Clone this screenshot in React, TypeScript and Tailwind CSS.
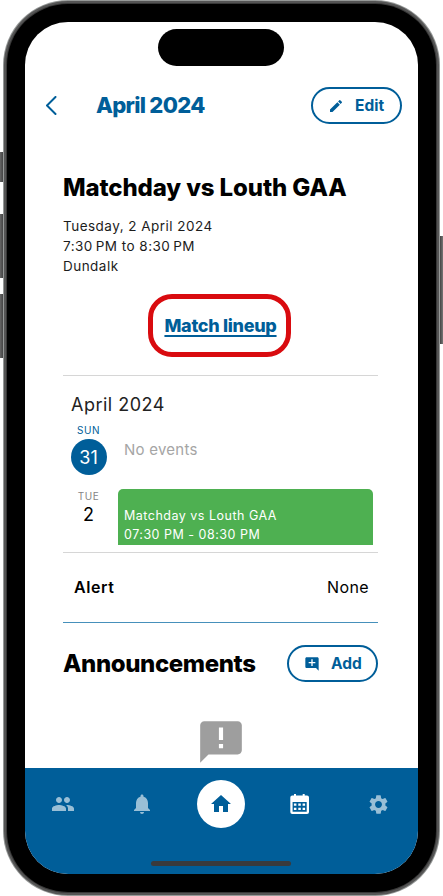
import type { ReactNode } from "react";
import { MdAddComment, MdAnnouncement, MdEdit, MdHome, MdNotifications, MdPeople, MdSettings } from "react-icons/md";

function PillButton({ icon, label }: { icon: ReactNode; label: string }) {
  return (
    <button className="flex h-[37px] w-[91px] items-center rounded-[19px] border-2 border-[#005e99] pl-[15px] text-[#005e99]">
      {icon}
      <span className="ml-[11px] text-[15.5px] leading-5 font-bold">{label}</span>
    </button>
  );
}

function ChevronLeft() {
  return (
    <svg className="h-5 w-3" viewBox="0 0 12 20" fill="none" stroke="#005e99" strokeWidth="2" strokeLinecap="round" strokeLinejoin="round">
      <path d="M10.500 1 2 9.500l8.500 8.500" />
    </svg>
  );
}

function CalendarMonth() {
  return (
    <svg className="size-6" viewBox="0 0 24 24" fill="currentColor">
      <path
        fillRule="evenodd"
        d="M6 2h2v1.500h6.700V2h2v1.500H19a2 2 0 0 1 2 2V20a2 2 0 0 1-2 2H4.300a2 2 0 0 1-2-2V5.500a2 2 0 0 1 2-2H6ZM4.600 10v9.800h14.100V10Z"
      />
      <path d="M5.900 11.500h2.500v2.300H5.900ZM10.300 11.500h2.500v2.300h-2.500ZM14.600 11.500h2.500v2.300h-2.500ZM5.900 15.700h2.500V18H5.900ZM10.300 15.700h2.500V18h-2.500ZM14.600 15.700h2.500V18h-2.500Z" />
    </svg>
  );
}

function TabBar() {
  return (
    <nav className="flex h-[106px] shrink-0 flex-col items-center bg-[#005e99]">
      <div className="mt-[12px] grid h-[48px] w-full grid-cols-5 place-items-center text-[#99bfd6]">
        <MdPeople className="ml-[-3px] size-6" />
        <MdNotifications className="ml-[-2px] size-6" />
        <div className="ml-[-1px] flex size-[48px] items-center justify-center rounded-full bg-white text-[#005e99]">
          <MdHome className="size-6" />
        </div>
        <div className="ml-[-1px] text-white">
          <CalendarMonth />
        </div>
        <MdSettings className="ml-[-1px] size-[23px]" />
      </div>
      <div className="mt-[33px] ml-[-1px] h-[5px] w-[140px] rounded-full bg-[#3a3a3c]" />
    </nav>
  );
}

export default function App() {
  return (
    <div className="relative h-[896px] w-[443px] overflow-hidden bg-white px-[3px] font-['Inter','Liberation_Sans',sans-serif]">
      <div className="absolute top-[152px] left-0 h-[30px] w-[3px] bg-gradient-to-r from-[#666] to-[#444]" />
      <div className="absolute top-[214px] left-0 h-[64px] w-[3px] bg-gradient-to-r from-[#666] to-[#444]" />
      <div className="absolute top-[294px] left-0 h-[64px] w-[3px] bg-gradient-to-r from-[#666] to-[#444]" />
      <div className="absolute top-[236px] right-0 h-[108px] w-[3px] bg-gradient-to-r from-[#444] to-[#777]" />

      <div className="h-[896px] w-[437px] rounded-[65px] bg-[#969998] p-px">
        <div className="h-full rounded-[64px] bg-[#555] p-[2px]">
          <div className="h-full rounded-[62px] bg-[#383838] p-px">
            <div className="h-full rounded-[61px] bg-black px-[18px] py-[18px]">
              <main className="relative flex h-[852px] w-[393px] flex-col overflow-hidden rounded-[43px] bg-white">
                <div className="absolute top-[7px] left-[132.5px] h-[37px] w-[126px] rounded-full bg-black" />

                <header className="mt-[65px] flex h-[37px] shrink-0 items-center pl-5">
                  <ChevronLeft />
                  <h1 className="mt-[-1px] ml-[39px] grow text-[22px] leading-7 font-extrabold tracking-[-0.7px] text-[#005e99]">April 2024</h1>
                  <div className="mr-4">
                    <PillButton icon={<MdEdit className="size-4" />} label="Edit" />
                  </div>
                </header>

                <div className="flex grow flex-col pr-10 pl-[38px]">
                  <h2 className="mt-[49px] h-[30px] text-[24px] leading-[30px] font-extrabold tracking-[-0.12px] whitespace-nowrap">Matchday vs Louth GAA</h2>
                  <div className="mt-[13px] text-[13.5px] leading-5 tracking-[0.47px] whitespace-nowrap text-[#1c1c1c]">
                    <p>Tuesday, 2 April 2024</p>
                    <p>
                      7:30{"\u202f"}PM to 8:30{"\u202f"}PM
                    </p>
                    <p>Dundalk</p>
                  </div>

                  <div className="mt-[18px] ml-[85px] flex h-[63px] w-[143px] items-center justify-center rounded-[24px] border-5 border-[#d90b0f]">
                    <a className="ml-[2px] text-[18px] leading-5 font-extrabold tracking-[-0.3px] whitespace-nowrap text-[#005e99] underline decoration-[1.500px] underline-offset-[3px] [text-decoration-skip-ink:none]">
                      Match lineup
                    </a>
                  </div>

                  <section className="mt-[18px] h-[178px] border-y border-[#d6d6d6] pl-[7px]">
                    <h3 className="mt-[17px] ml-px text-[18px] leading-6 tracking-[0.5px] text-[#222]">April 2024</h3>
                    <div className="mt-[7px] flex h-[65px]">
                      <div className="flex w-[37px] flex-col items-center">
                        <span className="text-[10px] leading-3 tracking-[0.6px] text-[#005e99]">SUN</span>
                        <span className="mt-[3px] flex size-[36px] items-center justify-center rounded-full bg-[#005e99] text-[18px] text-white">31</span>
                      </div>
                      <p className="mt-4 ml-[17px] text-[15px] leading-5 tracking-[0.25px] text-[#a5a5a5]">No events</p>
                    </div>
                    <div className="flex h-[56px]">
                      <div className="mt-px flex w-[37px] flex-col items-center">
                        <span className="text-[10px] leading-3 tracking-[0.6px] text-[#858585]">TUE</span>
                        <span className="mt-[3px] text-[18px] leading-5">2</span>
                      </div>
                      <div className="ml-[11px] h-[56px] w-[255px] rounded-t-[5px] bg-[#4eb051] pt-[17px] pl-[6px] text-[12.500px] leading-[19px] tracking-[0.5px] whitespace-nowrap text-white">
                        <p>Matchday vs Louth GAA</p>
                        <p>07:30 PM - 08:30 PM</p>
                      </div>
                    </div>
                  </section>

                  <div className="flex h-[69px] items-center justify-between pr-[9px] pb-[2px] pl-[11px] text-[16px] tracking-[0.4px]">
                    <span className="font-semibold tracking-[0.6px]">Alert</span>
                    <span>None</span>
                  </div>
                  <div className="h-px bg-[#4690bb]" />

                  <div className="mt-[22px] flex h-[37px] items-center justify-between">
                    <h2 className="text-[24px] leading-[30px] font-extrabold tracking-[-0.4px]">Announcements</h2>
                    <PillButton icon={<MdAddComment className="size-4" />} label="Add" />
                  </div>
                  <MdAnnouncement className="mt-[35px] ml-[133px] size-[50px] text-[#9e9e9e]" />
                </div>

                <TabBar />
              </main>
            </div>
          </div>
        </div>
      </div>
    </div>
  );
}
